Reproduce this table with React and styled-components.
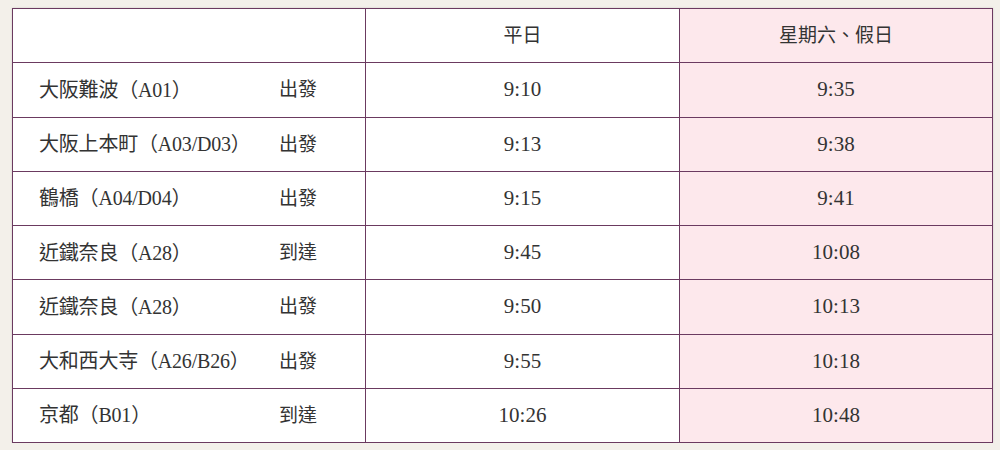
import React from "react";
import styled, { createGlobalStyle } from "styled-components";

const GlobalStyle = createGlobalStyle`
  html, body {
    margin: 0;
    padding: 0;
    background: #f3f0ea;
  }
  body {
    font-family: "Liberation Serif", "Noto Sans CJK TC", serif;
    color: #333;
  }
`;

const rows = [
  { station: "大阪難波（A01）", action: "出發", weekday: "9:10", holiday: "9:35" },
  { station: "大阪上本町（A03/D03）", action: "出發", weekday: "9:13", holiday: "9:38" },
  { station: "鶴橋（A04/D04）", action: "出發", weekday: "9:15", holiday: "9:41" },
  { station: "近鐵奈良（A28）", action: "到達", weekday: "9:45", holiday: "10:08" },
  { station: "近鐵奈良（A28）", action: "出發", weekday: "9:50", holiday: "10:13" },
  { station: "大和西大寺（A26/B26）", action: "出發", weekday: "9:55", holiday: "10:18" },
  { station: "京都（B01）", action: "到達", weekday: "10:26", holiday: "10:48" },
];

export default function App() {
  return (
    <>
      <GlobalStyle />
      <Page>
        <Table>
          <colgroup>
            <col style={{ width: 353 }} />
            <col style={{ width: 314 }} />
            <col style={{ width: 313 }} />
          </colgroup>
          <thead>
            <Row>
              <Cell />
              <Cell $center>平日</Cell>
              <Cell $center $pink>星期六、假日</Cell>
            </Row>
          </thead>
          <tbody>
            {rows.map((r, i) => (
              <Row key={i}>
                <Cell>
                  <StationWrap>
                    <Station>{r.station}</Station>
                    <Action>{r.action}</Action>
                  </StationWrap>
                </Cell>
                <Cell $center $time>{r.weekday}</Cell>
                <Cell $center $time $pink>{r.holiday}</Cell>
              </Row>
            ))}
          </tbody>
        </Table>
      </Page>
    </>
  );
}

const Page = styled.div`
  padding: 8px 0 0 12px;
`;

const Table = styled.table`
  width: 980px;
  border-collapse: collapse;
  table-layout: fixed;
  background: #fff;
  box-shadow: 0 0 2px rgba(0, 0, 0, 0.15);
`;

const Row = styled.tr`
  height: 54.25px;
`;

const Cell = styled.td`
  border: 1px solid #6b3a60;
  padding: 0;
  font-size: ${(p) => (p.$time ? "21px" : "19px")};
  line-height: 1;
  vertical-align: middle;
  text-align: ${(p) => (p.$center ? "center" : "left")};
  background: ${(p) => (p.$pink ? "#fde8ec" : "#fff")};
`;

const StationWrap = styled.div`
  display: flex;
  align-items: center;
  padding-left: 26px;
`;

const Station = styled.span`
  width: 240px;
  font-size: 20px;
  letter-spacing: -0.2px;
`;

const Action = styled.span`
  font-size: 19px;
`;
